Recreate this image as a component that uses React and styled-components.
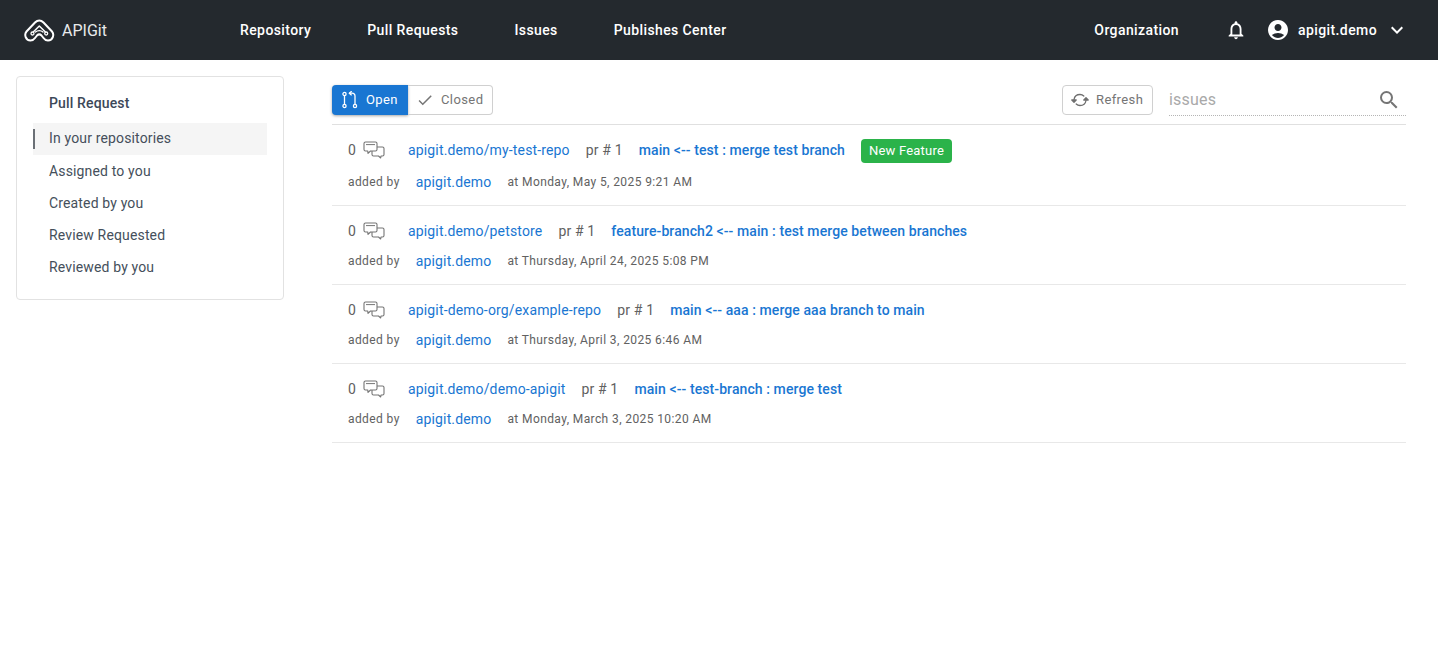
import React from 'react';
import styled, { createGlobalStyle } from 'styled-components';
import { MdNotificationsNone, MdAccountCircle, MdExpandMore, MdSearch, MdCheck } from 'react-icons/md';

const GlobalStyle = createGlobalStyle`
  html, body {
    margin: 0;
    padding: 0;
    background: #fff;
    font-family: Roboto, "Liberation Sans", sans-serif;
  }
`;

const Header = styled.header`
  display: flex;
  align-items: center;
  height: 60px;
  padding: 0 29px 0 24px;
  background: #24292e;
  color: #fff;
`;

const Brand = styled.div`
  display: flex;
  align-items: center;
  gap: 7px;
  width: 216px;
  font-size: 16px;
  letter-spacing: 0;
  color: #e8eaeb;
`;

const Nav = styled.nav`
  display: flex;
  flex: 1;
  gap: 56px;
`;

const NavLink = styled.a`
  font-size: 14px;
  font-weight: 500;
  letter-spacing: 0.4px;
  color: #fff;
`;

const HeaderRight = styled.div`
  display: flex;
  align-items: center;
`;

const BellIcon = styled(MdNotificationsNone)`
  margin-left: 46px;
  font-size: 22px;
`;

const AccountIcon = styled(MdAccountCircle)`
  margin-left: 19px;
  font-size: 24px;
`;

const UserName = styled(NavLink)`
  margin-left: 8px;
`;

const Chevron = styled(MdExpandMore)`
  margin-left: 8px;
  font-size: 24px;
`;

const Page = styled.div`
  display: flex;
  align-items: flex-start;
  gap: 48px;
  padding: 16px 32px 0 16px;
`;

const Sidebar = styled.aside`
  box-sizing: border-box;
  flex: 0 0 268px;
  height: 224px;
  padding: 11px 16px 0;
  border: 1px solid #e2e2e2;
  border-radius: 4px;
`;

const SidebarTitle = styled.div`
  padding-left: 16px;
  height: 35px;
  line-height: 30px;
  font-size: 14px;
  font-weight: 500;
  letter-spacing: 0.15px;
  color: #3c4858;
`;

const SidebarItem = styled.div`
  position: relative;
  height: 32px;
  line-height: ${(p) => (p.$active ? '30px' : '32px')};
  padding-left: 16px;
  font-size: 14px;
  letter-spacing: 0.15px;
  color: #454f5b;
  background: ${(p) => (p.$active ? '#f5f5f5' : 'transparent')};

  ${(p) =>
    p.$active &&
    `&::before {
      content: '';
      position: absolute;
      left: 0;
      top: 6px;
      width: 2px;
      height: 20px;
      background: #6b7076;
    }`}
`;

const Main = styled.main`
  flex: 1;
  min-width: 0;
`;

const Toolbar = styled.div`
  display: flex;
  align-items: center;
  height: 49px;
  padding: 1px 0;
  box-sizing: border-box;
  border-bottom: 1px solid #e0e0e0;
`;

const ToggleGroup = styled.div`
  display: flex;
  height: 30px;
`;

const ButtonLabel = styled.span`
  margin-bottom: 2px;
`;

const ToggleOpen = styled.div`
  display: flex;
  align-items: center;
  gap: 6px;
  box-sizing: border-box;
  width: 76px;
  padding-left: 10px;
  background: #1976d2;
  color: #fff;
  font-size: 13px;
  letter-spacing: 0.4px;
  border-radius: 4px 0 0 4px;
  box-shadow: 0 1px 3px rgba(0, 0, 0, 0.35);
`;

const ToggleClosed = styled.div`
  display: flex;
  align-items: center;
  gap: 7px;
  box-sizing: border-box;
  width: 85px;
  padding-left: 8px;
  border: 1px solid #d0d0d0;
  border-left: 0;
  border-radius: 0 4px 4px 0;
  color: #757575;
  font-size: 13px;
  letter-spacing: 0.4px;
`;

const RefreshButton = styled.div`
  display: flex;
  align-items: center;
  gap: 7px;
  box-sizing: border-box;
  height: 30px;
  width: 91px;
  margin-left: auto;
  padding-left: 8px;
  border: 1px solid #d0d0d0;
  border-radius: 4px;
  color: #757575;
  font-size: 13px;
  letter-spacing: 0.4px;
`;

const SearchBox = styled.div`
  display: flex;
  align-items: center;
  justify-content: space-between;
  box-sizing: border-box;
  width: 237px;
  height: 32px;
  margin-left: 16px;
  border-bottom: 1px dotted #b5b5b5;
  color: #a9a9a9;
  font-size: 16px;
  letter-spacing: 0.2px;
`;

const SearchIcon = styled(MdSearch)`
  margin-right: 5px;
  font-size: 24px;
  color: #757575;
`;

const Row = styled.div`
  box-sizing: border-box;
  padding: 0 16px 16px;
  border-bottom: 1px solid #e8e8e8;
`;

const TopLine = styled.div`
  display: flex;
  align-items: center;
  height: 50px;
  margin-bottom: ${(p) => (p.$tall ? '2px' : '0')};
  font-size: 14px;
  letter-spacing: 0.15px;
`;

const Count = styled.span`
  color: #616161;
`;

const ChatIcon = styled.svg`
  margin-left: 7px;
  width: 22px;
  height: 18px;
  color: #757575;
`;

const RepoLink = styled.a`
  margin-left: 23px;
  color: #1976d2;
`;

const PrNumber = styled.span`
  margin-left: 16px;
  color: #616161;
`;

const PrTitle = styled.a`
  margin-left: 16px;
  color: #1976d2;
  font-weight: 500;
  letter-spacing: 0.09px;
`;

const Badge = styled.span`
  margin-left: 16px;
  margin-top: 2px;
  padding: 0 8px;
  height: 24px;
  line-height: 24px;
  border-radius: 4px;
  background: #2bb34a;
  color: #fff;
  font-size: 13px;
  letter-spacing: 0.2px;
`;

const BottomLine = styled.div`
  display: flex;
  align-items: center;
  height: 14px;
  margin-top: -2px;
  font-size: 12px;
  letter-spacing: 0.4px;
  color: #616161;
`;

const AuthorLink = styled.a`
  margin-left: 16px;
  font-size: 14px;
  letter-spacing: 0.15px;
  color: #1976d2;
`;

const DateText = styled.span`
  margin-left: 16px;
`;

const LogoMark = () => (
  <svg width="31" height="23" viewBox="0 0 31 23" fill="none" stroke="#fff" strokeWidth="2" strokeLinejoin="round" strokeLinecap="round">
    <path d="M15.3 1.5 C13.2 1.5 12 2.5 11 3.5 L2.5 12.5 C0 15.5 1.5 21.5 6.5 21.5 C9 21.5 10 20.5 11 19 L13 16.5 C14.5 15 16 15 17.5 16.5 L19.5 19 C20.5 20.5 22 21.5 24 21.5 C29 21.5 30.5 15.5 28 12.5 L19.5 3.5 C18.5 2.5 17.5 1.5 15.3 1.5 Z" />
    <path d="M9.5 12.8 L15.3 7 L21.2 12.8" strokeWidth="1.5" />
    <path d="M11.5 13 C13.5 11.2 17 11.2 19 13" strokeWidth="1.3" />
    <circle cx="8.5" cy="14.5" r="1.5" strokeWidth="1.3" />
    <circle cx="22.2" cy="14.5" r="1.5" strokeWidth="1.3" />
  </svg>
);

const PullRequestIcon = () => (
  <svg width="18" height="18" viewBox="0 0 18 18" fill="none" stroke="#fff" strokeWidth="1.3" strokeLinecap="round" strokeLinejoin="round">
    <circle cx="2.5" cy="15" r="1.6" />
    <circle cx="2.5" cy="3" r="1.6" />
    <circle cx="13" cy="15" r="1.6" />
    <path d="M2.5 4.6 V13.4" />
    <path d="M13 13.4 V5 C13 3.3 12 2.2 10 2.2 H7.5" />
    <path d="M9.3 0.6 L7.3 2.2 L9.3 3.9" />
  </svg>
);

const RefreshIcon = () => (
  <svg width="18" height="18" viewBox="0 0 18 18" fill="none" stroke="#6f6f6f" strokeWidth="1.3" strokeLinecap="round" strokeLinejoin="round">
    <path d="M3 8.5 C3.5 5.5 6 3.5 9 3.5 C10.5 3.5 11.8 4 12.8 5" />
    <path d="M15 9.5 C14.5 12.5 12 14.5 9 14.5 C7.5 14.5 6.2 14 5.2 13" />
    <path d="M0.8 9 H5.2 L3 11.2 Z" fill="#6f6f6f" />
    <path d="M12.8 9 H17.2 L15 6.8 Z" fill="#6f6f6f" />
  </svg>
);

const ChatBubbles = () => (
  <ChatIcon viewBox="0 0 22 18" fill="none" stroke="currentColor" strokeWidth="1.1" strokeLinejoin="round">
    <path d="M2.5 1 H12.5 C13.5 1 14 1.5 14 2.5 V8.5 C14 9.5 13.5 10 12.5 10 H7.5 L5 12.3 L4.8 10 H2.5 C1.5 10 1 9.5 1 8.5 V2.5 C1 1.5 1.5 1 2.5 1 Z" />
    <path d="M3 3.6 H12" strokeWidth="1" />
    <path d="M14 6 H19.5 C20.5 6 21 6.5 21 7.5 V13.5 C21 14.5 20.5 15 19.5 15 H18 L17.7 17 L15.5 15 H10.5 C9.5 15 9 14.5 9 13.5 V10" />
  </ChatIcon>
);

const sideItems = ['In your repositories', 'Assigned to you', 'Created by you', 'Review Requested', 'Reviewed by you'];

const pulls = [
  { repo: 'apigit.demo/my-test-repo', title: 'main <-- test : merge test branch', date: 'at Monday, May 5, 2025 9:21 AM', badge: 'New Feature' },
  { repo: 'apigit.demo/petstore', title: 'feature-branch2 <-- main : test merge between branches', date: 'at Thursday, April 24, 2025 5:08 PM' },
  { repo: 'apigit-demo-org/example-repo', title: 'main <-- aaa : merge aaa branch to main', date: 'at Thursday, April 3, 2025 6:46 AM' },
  { repo: 'apigit.demo/demo-apigit', title: 'main <-- test-branch : merge test', date: 'at Monday, March 3, 2025 10:20 AM' },
];

function App() {
  return (
    <>
      <GlobalStyle />
      <Header>
        <Brand>
          <LogoMark />
          <span>APIGit</span>
        </Brand>
        <Nav>
          <NavLink>Repository</NavLink>
          <NavLink>Pull Requests</NavLink>
          <NavLink>Issues</NavLink>
          <NavLink>Publishes Center</NavLink>
        </Nav>
        <HeaderRight>
          <NavLink>Organization</NavLink>
          <BellIcon />
          <AccountIcon />
          <UserName>apigit.demo</UserName>
          <Chevron />
        </HeaderRight>
      </Header>
      <Page>
        <Sidebar>
          <SidebarTitle>Pull Request</SidebarTitle>
          {sideItems.map((item, index) => (
            <SidebarItem key={item} $active={index === 0}>{item}</SidebarItem>
          ))}
        </Sidebar>
        <Main>
          <Toolbar>
            <ToggleGroup>
              <ToggleOpen><PullRequestIcon /><ButtonLabel>Open</ButtonLabel></ToggleOpen>
              <ToggleClosed><MdCheck size={18} /><ButtonLabel>Closed</ButtonLabel></ToggleClosed>
            </ToggleGroup>
            <RefreshButton><RefreshIcon /><ButtonLabel>Refresh</ButtonLabel></RefreshButton>
            <SearchBox>
              <span>issues</span>
              <SearchIcon />
            </SearchBox>
          </Toolbar>
          {pulls.map((pull) => (
            <Row key={pull.repo}>
              <TopLine $tall={Boolean(pull.badge)}>
                <Count>0</Count>
                <ChatBubbles />
                <RepoLink>{pull.repo}</RepoLink>
                <PrNumber>pr # 1</PrNumber>
                <PrTitle>{pull.title}</PrTitle>
                {pull.badge && <Badge>{pull.badge}</Badge>}
              </TopLine>
              <BottomLine>
                <span>added by</span>
                <AuthorLink>apigit.demo</AuthorLink>
                <DateText>{pull.date}</DateText>
              </BottomLine>
            </Row>
          ))}
        </Main>
      </Page>
    </>
  );
}

export default App;
